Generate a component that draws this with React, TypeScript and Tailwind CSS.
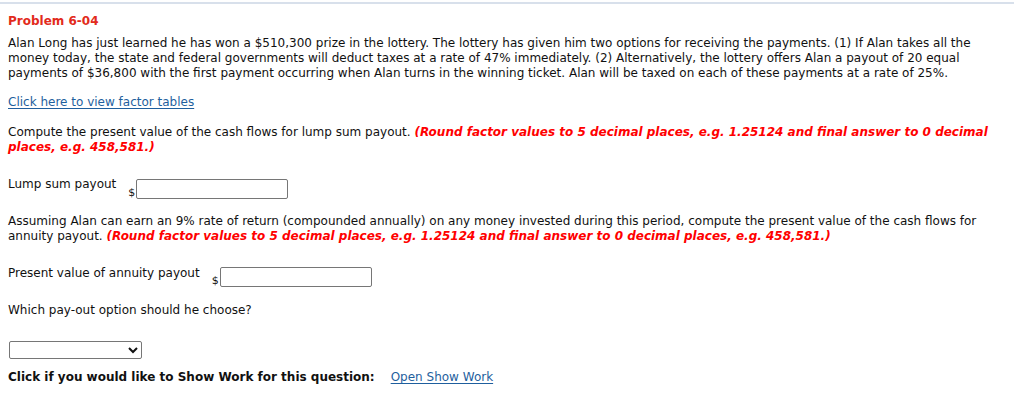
export default function App() {
  return (
    <div
      className="min-h-screen bg-white text-[12px] leading-[15px] text-[#111]"
      style={{ fontFamily: 'Verdana, "DejaVu Sans", sans-serif' }}
    >
      <div className="mt-[2px] border-t-2 border-[#d8e0eb]" />
      <div className="px-2">
        <h2 className="mt-[10px] font-bold text-[#e22b1c]">Problem 6-04</h2>

        <p className="mt-[7px]">
          Alan Long has just learned he has won a $510,300 prize in the lottery. The lottery has given him two options for
          receiving the payments. (1) If Alan takes all the
          <br />
          money today, the state and federal governments will deduct taxes at a rate of 47% immediately. (2) Alternatively,
          the lottery offers Alan a payout of 20 equal
          <br />
          payments of $36,800 with the first payment occurring when Alan turns in the winning ticket. Alan will be taxed on
          each of these payments at a rate of 25%.
        </p>

        <p className="mt-[14px]">
          <a href="#" className="text-[#1f5f9e] underline underline-offset-2">
            Click here to view factor tables
          </a>
        </p>

        <p className="mt-[15px]">
          Compute the present value of the cash flows for lump sum payout.{' '}
          <b className="italic text-[#ff0000]">
            (Round factor values to 5 decimal places, e.g. 1.25124 and final answer to 0 decimal
            <br />
            places, e.g. 458,581.)
          </b>
        </p>

        {/* lump sum */}
        <div className="mt-[22px] flex items-start">
          <span>Lump sum payout</span>
          <div className="ml-[12px] flex items-end">
            <span className="mb-[1px] mr-[1px] text-[11px] leading-none">$</span>
            <input className="mt-[1.5px] h-[20px] w-[152px] rounded-[2px] border border-[#767676] bg-white px-1 outline-none" />
          </div>
        </div>

        <p className="mt-[15px]">
          Assuming Alan can earn an 9% rate of return (compounded annually) on any money invested during this period, compute
          the present value of the cash flows for
          <br />
          annuity payout.{' '}
          <b className="italic text-[#ff0000]">
            (Round factor values to 5 decimal places, e.g. 1.25124 and final answer to 0 decimal places, e.g. 458,581.)
          </b>
        </p>

        {/* annuity */}
        <div className="mt-[22px] flex items-start">
          <span>Present value of annuity payout</span>
          <div className="ml-[12px] flex items-end">
            <span className="mb-[1px] mr-[1px] text-[11px] leading-none">$</span>
            <input className="mt-[1.5px] h-[20px] w-[152px] rounded-[2px] border border-[#767676] bg-white px-1 outline-none" />
          </div>
        </div>

        <p className="mt-[16px]">Which pay-out option should he choose?</p>

        <div className="mt-[23px]">
          <select className="ml-px h-[18px] w-[133px] rounded-[2px] border border-[#767676] bg-white text-[13px]">
            <option value=""></option>
            <option>Lump sum payout</option>
            <option>Annuity payout</option>
          </select>
        </div>

        <div className="mt-[11px] flex">
          <b>Click if you would like to Show Work for this question:</b>
          <a href="#" className="ml-[16px] text-[#1f5f9e] underline underline-offset-2">
            Open Show Work
          </a>
        </div>
      </div>
    </div>
  )
}
